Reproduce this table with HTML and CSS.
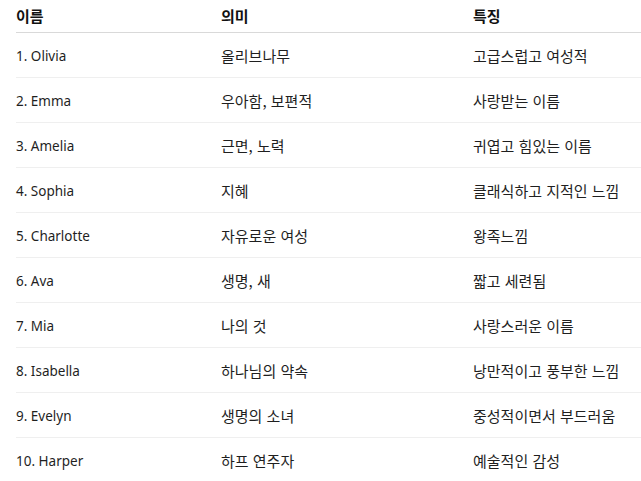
FILE: index.html
```html
<!DOCTYPE html>
<html lang="ko">
<head>
<meta charset="utf-8">
<link rel="stylesheet" href="styles.css">
</head>
<body>
<div class="wrap">
<table class="names">
<thead>
<tr><th class="c1">이름</th><th class="c2">의미</th><th class="c3">특징</th></tr>
</thead>
<tbody>
<tr><td class="en">1. Olivia</td><td>올리브나무</td><td>고급스럽고 여성적</td></tr>
<tr><td class="en">2. Emma</td><td>우아함, 보편적</td><td>사랑받는 이름</td></tr>
<tr><td class="en">3. Amelia</td><td>근면, 노력</td><td>귀엽고 힘있는 이름</td></tr>
<tr><td class="en">4. Sophia</td><td>지혜</td><td>클래식하고 지적인 느낌</td></tr>
<tr><td class="en">5. Charlotte</td><td>자유로운 여성</td><td>왕족느낌</td></tr>
<tr><td class="en">6. Ava</td><td>생명, 새</td><td>짧고 세련됨</td></tr>
<tr><td class="en">7. Mia</td><td>나의 것</td><td>사랑스러운 이름</td></tr>
<tr><td class="en">8. Isabella</td><td>하나님의 약속</td><td>낭만적이고 풍부한 느낌</td></tr>
<tr><td class="en">9. Evelyn</td><td>생명의 소녀</td><td>중성적이면서 부드러움</td></tr>
<tr><td class="en">10. Harper</td><td>하프 연주자</td><td>예술적인 감성</td></tr>
</tbody>
</table>
</div>
</body>
</html>
```
FILE: styles.css
```css
html, body {
  margin: 0;
  padding: 0;
  background: #ffffff;
}
.wrap {
  padding-left: 16px;
}
.names {
  border-collapse: collapse;
  width: 625px;
  table-layout: fixed;
  font-family: "Noto Sans CJK KR", "Noto Sans", sans-serif;
  font-size: 15px;
  line-height: 20px;
  color: #1f1f1f;
}
.names th {
  text-align: left;
  font-weight: 700;
  height: 32px;
  padding: 0;
  vertical-align: middle;
  border-bottom: 1px solid #d9d9d9;
  color: #111;
}
.names td {
  box-sizing: border-box;
  height: 45px;
  padding: 2px 0 0 0;
  vertical-align: middle;
  border-bottom: 1px solid #efefef;
}
.names td.en {
  font-family: "Noto Sans", sans-serif;
  font-size: 13.5px;
}
.names tbody tr:last-child td {
  border-bottom: none;
}
.c1 { width: 205px; }
.c2 { width: 252px; }
```
